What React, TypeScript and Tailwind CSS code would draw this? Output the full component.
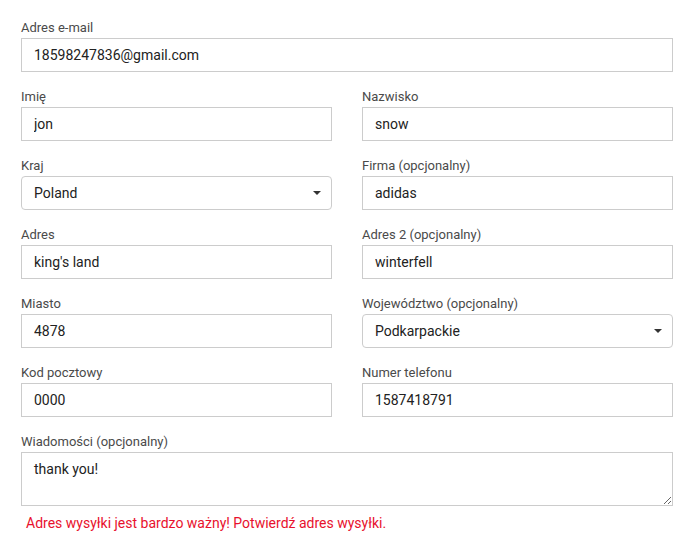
const labelCls = 'block pt-[2px] mb-px text-[13px] leading-[18px] text-[#4a4a4a]';
const inputCls =
  'block w-full h-[34px] border border-[#ccc] bg-white px-[12px] text-[14px] text-[#222] outline-none';

type FieldProps = { label: string; value: string };

const Field = ({ label, value }: FieldProps) => (
  <div>
    <label className={labelCls}>{label}</label>
    <input className={inputCls} value={value} readOnly />
  </div>
);

const SelectField = ({ label, value }: FieldProps) => (
  <div>
    <label className={labelCls}>{label}</label>
    <div className="relative">
      <select
        className={`${inputCls} appearance-none rounded-[4px] pr-8`}
        value={value}
        onChange={() => {}}
      >
        <option>{value}</option>
      </select>
      <span className="pointer-events-none absolute right-[11px] top-[15px] h-0 w-0 border-x-[4px] border-t-[4px] border-x-transparent border-t-[#333]" />
    </div>
  </div>
);

export default function App() {
  return (
    <div className="min-h-[552px] w-[692px] bg-white font-['Roboto',sans-serif]">
      <form className="ml-[21px] w-[652px] pt-[17px]">
        <div className="flex flex-col gap-[14px]">
          <Field label="Adres e-mail" value="18598247836@gmail.com" />
          <div className="grid grid-cols-2 gap-x-[30px] gap-y-[14px]">
            <Field label="Imię" value="jon" />
            <Field label="Nazwisko" value="snow" />
            <SelectField label="Kraj" value="Poland" />
            <Field label="Firma (opcjonalny)" value="adidas" />
            <Field label="Adres" value="king's land" />
            <Field label="Adres 2 (opcjonalny)" value="winterfell" />
            <Field label="Miasto" value="4878" />
            <SelectField label="Województwo (opcjonalny)" value="Podkarpackie" />
            <Field label="Kod pocztowy" value="0000" />
            <Field label="Numer telefonu" value="1587418791" />
          </div>
          <div>
            <label className={labelCls}>Wiadomości (opcjonalny)</label>
            <textarea
              className="block h-[54px] w-full border border-[#ccc] bg-white px-[12px] pt-[6px] text-[14px] leading-[20px] text-[#222] outline-none"
              value="thank you!"
              readOnly
            />
          </div>
        </div>
        <p className="mt-[7px] pl-[5px] text-[14px] leading-[20px] text-[#e8112d]">
          Adres wysyłki jest bardzo ważny! Potwierdź adres wysyłki.
        </p>
      </form>
    </div>
  );
}
